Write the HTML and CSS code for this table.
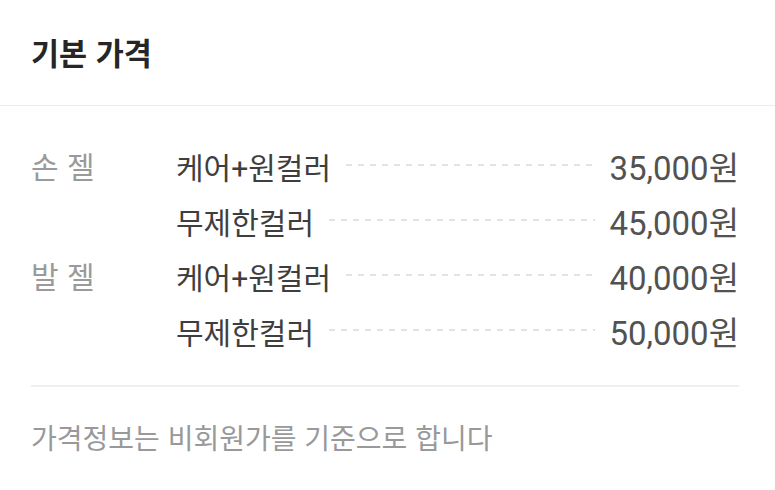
FILE: index.html
```html
<!DOCTYPE html>
<html lang="ko">
<head>
<meta charset="utf-8">
<link rel="stylesheet" href="styles.css">
</head>
<body>
<div class="panel">
  <header class="head"><h1 class="title">기본 가격</h1></header>
  <div class="body">
    <div class="group">
      <div class="cat">손 젤</div>
      <div class="items">
        <div class="item"><span class="name">케어+원컬러</span><span class="dots"></span><span class="price">35,000원</span></div>
        <div class="item"><span class="name">무제한컬러</span><span class="dots"></span><span class="price">45,000원</span></div>
      </div>
    </div>
    <div class="group">
      <div class="cat">발 젤</div>
      <div class="items">
        <div class="item"><span class="name">케어+원컬러</span><span class="dots"></span><span class="price">40,000원</span></div>
        <div class="item"><span class="name">무제한컬러</span><span class="dots"></span><span class="price">50,000원</span></div>
      </div>
    </div>
    <div class="divider"></div>
    <p class="note">가격정보는 비회원가를 기준으로 합니다</p>
  </div>
</div>
</body>
</html>
```

FILE: styles.css
```css
html, body {
  margin: 0;
  padding: 0;
  background: #fff;
}
body {
  font-family: Roboto, "Noto Sans CJK KR", sans-serif;
  width: 776px;
  height: 490px;
  overflow: hidden;
}
.panel {
  width: 775px;
  height: 490px;
  border-right: 1px solid #d4d4d4;
}
.head {
  height: 105px;
  border-bottom: 1px solid #ececec;
  display: flex;
  align-items: center;
  padding-left: 31px;
}
.title {
  margin: 0;
  font-family: "Noto Sans CJK KR", sans-serif;
  font-size: 30.5px;
  font-weight: 700;
  color: #262626;
  line-height: 1;
}
.body {
  padding: 32px 36px 0 31px;
}
.group {
  display: grid;
  grid-template-columns: 145px 1fr;
}
.cat {
  font-family: "Noto Sans CJK KR", sans-serif;
  font-size: 30px;
  line-height: 55px;
  color: #9a9a9a;
}
.item {
  display: flex;
  align-items: center;
  height: 55px;
}
.name {
  font-size: 30px;
  color: #3e3e3e;
  white-space: nowrap;
}
.dots {
  flex: 1;
  height: 2px;
  margin: 0 14px 2px 15px;
  background: repeating-linear-gradient(to right, #e3e3e3 0 6px, transparent 6px 12px);
}
.price {
  font-size: 33px;
  color: #525252;
  white-space: nowrap;
}
.divider {
  margin-top: 27px;
  height: 2px;
  background: #efefef;
}
.note {
  margin: 30px 0 0;
  font-family: "Noto Sans CJK KR", sans-serif;
  font-size: 28px;
  line-height: 40px;
  color: #999;
}
```
